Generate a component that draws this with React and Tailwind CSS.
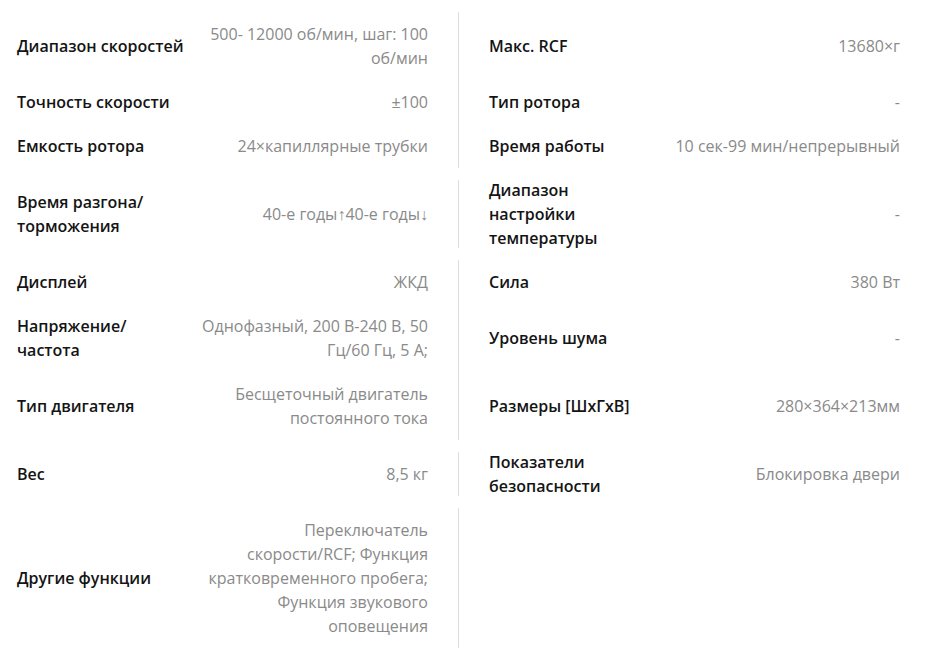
import React from "react";

const groups = [
  [
    { h: "h-[68px]", l: ["Диапазон скоростей"], lv: "500- 12000 об/мин, шаг: 100 об/мин", r: ["Макс. RCF"], rv: "13680×г" },
    { h: "h-[44px]", l: ["Точность скорости"], lv: "±100", r: ["Тип ротора"], rv: "-" },
    { h: "h-[44px]", l: ["Емкость ротора"], lv: "24×капиллярные трубки", r: ["Время работы"], rv: "10 сек-99 мин/непрерывный" },
  ],
  [
    { h: "h-[68px]", l: ["Время разгона/", "торможения"], lv: "40-е годы↑40-е годы↓", r: ["Диапазон", "настройки", "температуры"], rv: "-" },
  ],
  [
    { h: "h-[44px]", l: ["Дисплей"], lv: "ЖКД", r: ["Сила"], rv: "380 Вт" },
    { h: "h-[68px]", l: ["Напряжение/", "частота"], lv: "Однофазный, 200 В-240 В, 50 Гц/60 Гц, 5 А;", r: ["Уровень шума"], rv: "-" },
    { h: "h-[68px]", l: ["Тип двигателя"], lv: "Бесщеточный двигатель постоянного тока", r: ["Размеры [ШхГхВ]"], rv: "280×364×213мм" },
  ],
  [
    { h: "h-[44px]", l: ["Вес"], lv: "8,5 кг", r: ["Показатели", "безопасности"], rv: "Блокировка двери" },
  ],
  [
    { h: "h-[140px]", l: ["Другие функции"], lv: "Переключатель скорости/RCF; Функция кратковременного пробега; Функция звукового оповещения", r: null, rv: "" },
  ],
];

function Pair({ label, value }) {
  return (
    <div className="flex items-center w-full">
      <div className="w-[181px] shrink-0 whitespace-nowrap font-semibold text-[#141414]">
        {label &&
          label.map((t, i) => (
            <div key={i}>{t}</div>
          ))}
      </div>
      <div className="flex-1 text-right text-[#8a8a8a]">{value}</div>
    </div>
  );
}

export default function App() {
  return (
    <div className="w-[946px] h-[663px] bg-white pt-3 font-['Open_Sans',sans-serif] text-[16px] leading-6">
      <div className="flex flex-col gap-3 w-[930px]">
        {groups.map((g, gi) => (
          <div key={gi} className="flex flex-col">
            {g.map((row, ri) => (
              <div key={ri} className={`flex items-stretch ${row.h}`}>
                <div className="w-[458px] shrink-0 flex items-center pl-[17px] pr-[30px]">
                  <Pair label={row.l} value={row.lv} />
                </div>
                <div className="w-[472px] shrink-0 flex items-center border-l border-[#dcdcdc] pl-[30px] pr-[30px]">
                  {row.r && <Pair label={row.r} value={row.rv} />}
                </div>
              </div>
            ))}
          </div>
        ))}
      </div>
    </div>
  );
}
